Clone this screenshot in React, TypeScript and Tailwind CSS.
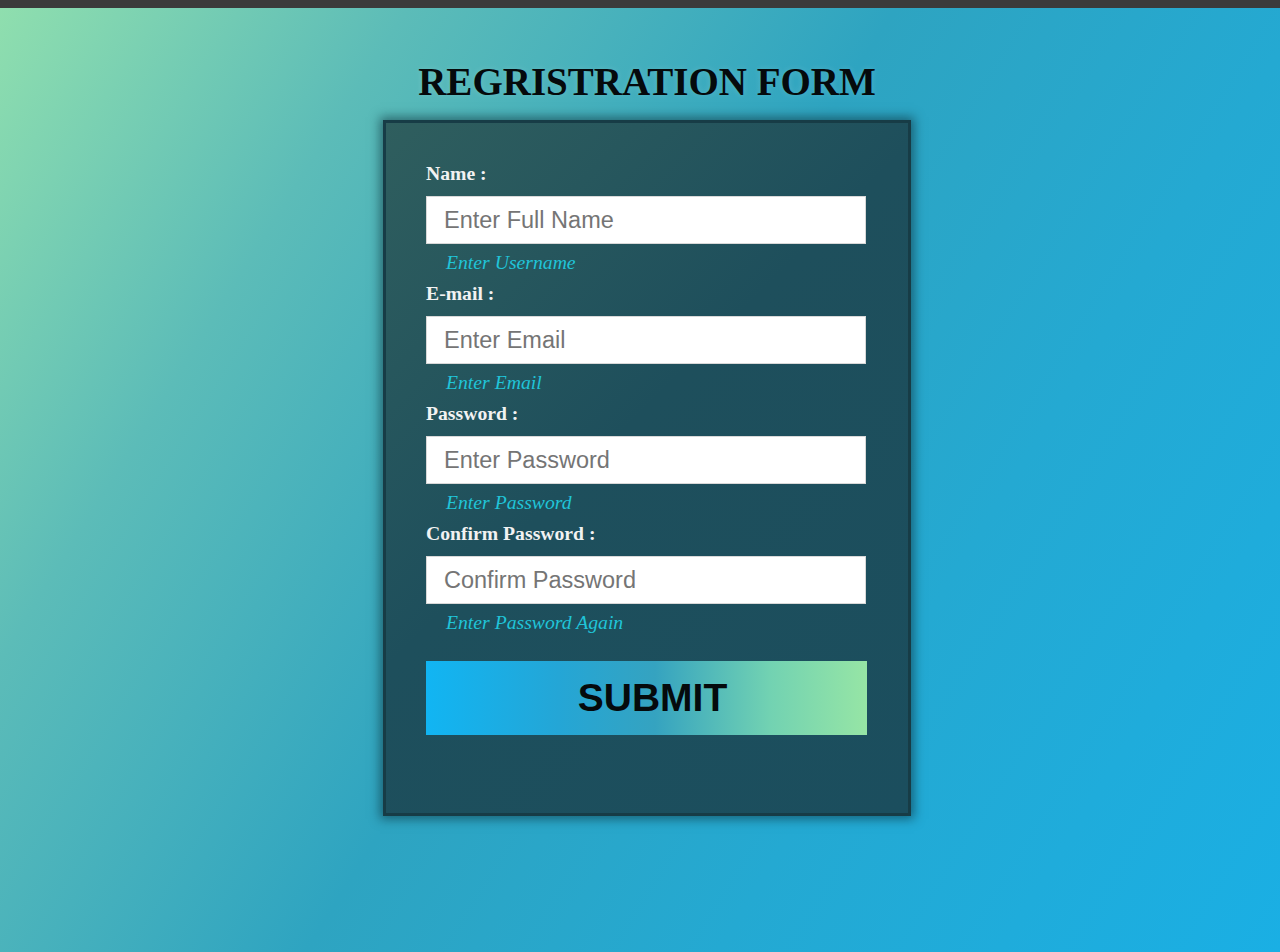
import React from 'react';

const fields = [
  { label: 'Name :', type: 'text', placeholder: 'Enter Full Name', hint: 'Enter Username' },
  { label: 'E-mail :', type: 'email', placeholder: 'Enter Email', hint: 'Enter Email' },
  { label: 'Password :', type: 'password', placeholder: 'Enter Password', hint: 'Enter Password' },
  { label: 'Confirm Password :', type: 'password', placeholder: 'Confirm Password', hint: 'Enter Password Again' },
];

export default function App() {
  return (
    <div className="min-h-[952px] flex flex-col bg-[linear-gradient(122deg,#90dfae_0%,#5cbcb8_22%,#2ea4c1_48%,#24a9d2_70%,#1aafe4_100%)]">
      <div className="h-2 bg-[#3b3b3b]" />

      <div className="flex flex-col items-center pl-[14px]">
        <h1 className="mt-[51px] text-[39px] leading-[46px] font-bold text-[#050a0c] font-['Liberation_Serif',serif] [text-shadow:0_0_6px_rgba(255,255,255,0.15)]">
          REGRISTRATION FORM
        </h1>

        <form
          onSubmit={(e) => e.preventDefault()}
          className="mt-[15px] w-[528px] border-[3px] border-[#173c46] bg-[linear-gradient(135deg,#2f5e5e_0%,#1e4f5c_45%,#1b4e5e_100%)] px-10 pt-[38px] pb-[78px] shadow-[0_0_10px_3px_rgba(10,40,50,0.55)] font-['Liberation_Serif',serif]"
        >
          {fields.map((f) => (
            <div key={f.label} className="flex flex-col mb-[7px]">
              <label className="text-[19.7px] leading-6 font-bold text-[#f2f2f2]">{f.label}</label>
              <input
                type={f.type}
                placeholder={f.placeholder}
                className="mt-[11px] h-12 w-[440px] bg-white border border-[#d8d8d8] pl-[17px] text-[23.5px] text-[#333] placeholder:text-[#757575] outline-none font-['Liberation_Sans',Arial,sans-serif]"
              />
              <span className="mt-[6px] pl-5 text-[19.7px] leading-6 italic text-[#20c4d8]">{f.hint}</span>
            </div>
          ))}

          <button
            type="submit"
            className="mt-[27px] h-[74px] w-[441px] pl-3 bg-[linear-gradient(90deg,#11b5f3_0%,#24a6d6_30%,#35a3c0_52%,#72d2b2_78%,#96e5a5_100%)] text-[39px] font-bold text-[#050a0c] font-['Liberation_Sans',Arial,sans-serif] flex items-center justify-center"
          >
            SUBMIT
          </button>
        </form>
      </div>
    </div>
  );
}
